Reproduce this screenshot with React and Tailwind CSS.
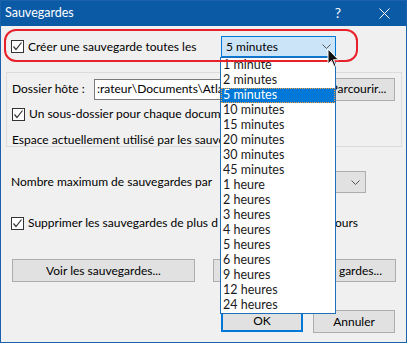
import React from "react";

const items = [
  "1 minute",
  "2 minutes",
  "5 minutes",
  "10 minutes",
  "15 minutes",
  "20 minutes",
  "30 minutes",
  "45 minutes",
  "1 heure",
  "2 heures",
  "3 heures",
  "4 heures",
  "5 heures",
  "6 heures",
  "9 heures",
  "12 heures",
  "24 heures",
];

const Check = () => (
  <span className="w-[13px] h-[13px] border border-[#333] bg-white flex items-center justify-center shrink-0">
    <svg width="11" height="11" viewBox="0 0 11 11">
      <polyline points="1.5,5.5 4,8.5 9.5,1.5" fill="none" stroke="#333" strokeWidth="1.2" />
    </svg>
  </span>
);

const Chevron = () => (
  <svg width="9" height="5" viewBox="0 0 9 5">
    <polyline points="0.5,0.5 4.5,4.5 8.5,0.5" fill="none" stroke="#555" strokeWidth="1" />
  </svg>
);

const Btn = ({ children, className = "" }) => (
  <div
    className={`h-[23px] bg-[#e1e1e1] border border-[#adadad] flex items-center justify-center whitespace-nowrap ${className}`}
  >
    {children}
  </div>
);

export default function App() {
  return (
    <div className="w-[407px] h-[343px] relative bg-[#f0f0f0] border border-[#1a62ad] text-[12px] text-black font-['Lato',sans-serif] leading-none overflow-hidden">
      {/* title bar */}
      <div className="h-[26px] bg-[#0b5aa6] text-white flex items-center pl-[5px] -mt-px -mx-px text-[12.5px]">
        <span className="flex-1">Sauvegardes</span>
        <span className="w-[46px] text-center text-[14px]">?</span>
        <span className="w-[46px] flex justify-center">
          <svg width="11" height="11" viewBox="0 0 11 11">
            <path d="M0.5 0.5 L10.5 10.5 M10.5 0.5 L0.5 10.5" stroke="#fff" strokeWidth="1" />
          </svg>
        </span>
      </div>

      {/* first row */}
      <div className="flex items-center mt-[10px] pl-[10px] h-[21px]">
        <Check />
        <span className="ml-[4px] w-[193px] whitespace-nowrap">Créer une sauvegarde toutes les</span>
        <div className="w-[115px] h-[21px] bg-[#cce4f7] border border-[#0078d7] flex items-center pl-[4px] pr-[4px]">
          <span className="flex-1">5 minutes</span>
          <Chevron />
        </div>
      </div>

      {/* group box */}
      <div className="mt-[15px] ml-[5px] mr-[4px] h-[75px] border border-[#dcdcdc] pl-[5px] pr-[6px] pt-[5px]">
        <div className="flex items-center h-[22px]">
          <span className="w-[82px] whitespace-nowrap">Dossier hôte :</span>
          <div className="flex-1 h-[21px] bg-white border border-[#7a7a7a] flex items-center pl-[2px] whitespace-nowrap">
            :rateur\Documents\Atla
          </div>
          <Btn className="ml-[6px] w-[73px] h-[21px]">Parcourir...</Btn>
        </div>
        <div className="flex items-center mt-[7px] h-[14px]">
          <Check />
          <span className="ml-[4px] whitespace-nowrap">Un sous-dossier pour chaque docum</span>
        </div>
        <div className="mt-[13px] whitespace-nowrap">Espace actuellement utilisé par les sauve</div>
      </div>

      {/* max backups */}
      <div className="flex items-center mt-[24px] pl-[10px] h-[22px]">
        <span className="flex-1 whitespace-nowrap">Nombre maximum de sauvegardes par</span>
        <div className="w-[80px] h-[22px] mr-[40px] bg-[#e1e1e1] border border-[#adadad] flex items-center justify-end pr-[5px]">
          <Chevron />
        </div>
      </div>

      {/* delete older */}
      <div className="flex items-center mt-[23px] pl-[10px] h-[14px]">
        <Check />
        <span className="ml-[4px] w-[307px] whitespace-nowrap">Supprimer les sauvegardes de plus d</span>
        <span>ours</span>
      </div>

      {/* buttons */}
      <div className="flex mt-[29px] pl-[11px] gap-[18px]">
        <Btn className="w-[183px]">Voir les sauvegardes...</Btn>
        <Btn className="w-[183px] justify-end pr-[13px]">gardes...</Btn>
      </div>

      <div className="flex justify-end mt-[28px] pr-[11px] gap-[10px]">
        <div className="w-[82px] h-[22px] bg-[#e1e1e1] border-2 border-[#0078d7] flex items-center justify-center">
          OK
        </div>
        <Btn className="w-[82px] h-[22px]">Annuler</Btn>
      </div>

      {/* dropdown list overlay */}
      <div className="absolute left-[219px] top-[56px] w-[116px] bg-white border border-[#1f6fb8]">
        {items.map((t, i) => (
          <div
            key={t}
            className={`h-[15px] flex items-center pl-[2px] text-[12.5px] ${
              i === 2
                ? "bg-[#0078d7] text-white outline-1 outline-dotted outline-[#f0a040] -outline-offset-1"
                : "text-[#1a1a1a]"
            }`}
          >
            {t}
          </div>
        ))}
      </div>

      {/* red annotation */}
      <div className="absolute left-[3px] top-[28px] w-[354px] h-[33px] border-2 border-[#e8202a] rounded-[12px] pointer-events-none" />

      {/* cursor */}
      <svg className="absolute left-[326px] top-[47px]" width="13" height="21" viewBox="0 0 13 21">
        <path d="M1 1 L1 16 L4.5 12.5 L7 18.5 L9 17.5 L6.5 11.8 L11.5 11.8 Z" fill="#111" stroke="#fff" strokeWidth="1" />
      </svg>
    </div>
  );
}
